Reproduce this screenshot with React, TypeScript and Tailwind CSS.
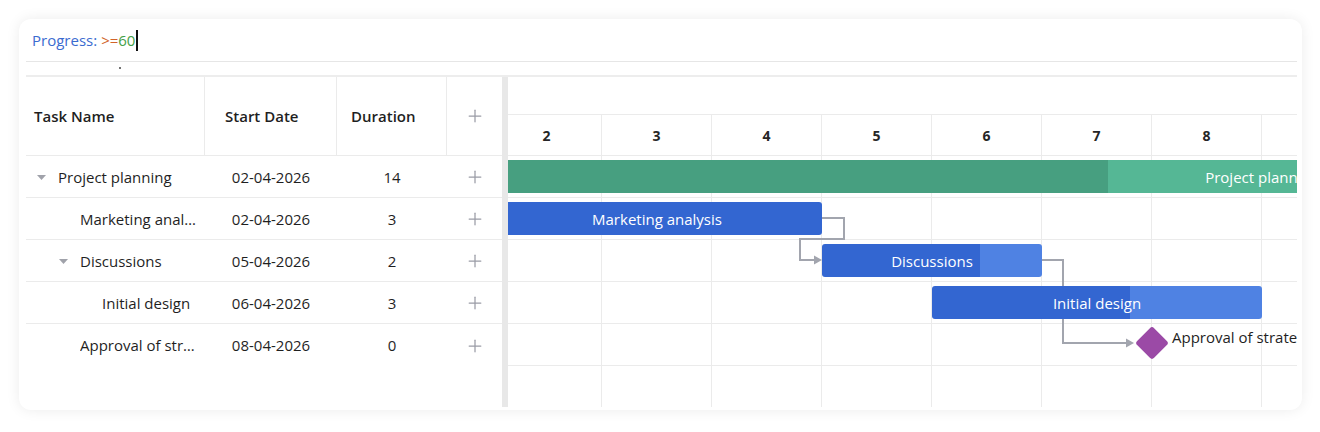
import { Plus } from "lucide-react"

type Task = {
    name: string
    start: string
    duration: number
    level: number
    parent?: boolean
}

const tasks: Task[] = [
    { name: "Project planning", start: "02-04-2026", duration: 14, level: 0, parent: true },
    { name: "Marketing analysis", start: "02-04-2026", duration: 3, level: 1 },
    { name: "Discussions", start: "05-04-2026", duration: 2, level: 1, parent: true },
    { name: "Initial design", start: "06-04-2026", duration: 3, level: 2 },
    { name: "Approval of strategy", start: "08-04-2026", duration: 0, level: 1 },
]

const days = [2, 3, 4, 5, 6, 7, 8, 9]
const DAY = 110
const ROW = 42

type Bar = {
    label: string
    day: number
    len: number
    row: number
    progress: number
    dark: string
    light: string
}

const bars: Bar[] = [
    { label: "Project planning", day: 0, len: 14, row: 0, progress: 40, dark: "#479f80", light: "#55b795" },
    { label: "Marketing analysis", day: 0, len: 3, row: 1, progress: 100, dark: "#3366d1", light: "#4f82e3" },
    { label: "Discussions", day: 3, len: 2, row: 2, progress: 72, dark: "#3366d1", light: "#4f82e3" },
    { label: "Initial design", day: 4, len: 3, row: 3, progress: 60, dark: "#3366d1", light: "#4f82e3" },
]

function Caret() {
    return (
        <svg width="9" height="5" viewBox="0 0 9 5" className="shrink-0">
            <path d="M0 0h9L4.5 5z" fill="#a0a2aa" />
        </svg>
    )
}

function TaskGrid() {
    return (
        <div className="w-[476px] shrink-0 flex flex-col">
            {/* Header */}
            <div className="h-[79px] flex border-b border-[#ebebeb] text-[15px] font-semibold text-[#1f1f1f]">
                <div className="w-[179px] border-r border-[#ebebeb] flex items-center pl-2">Task Name</div>
                <div className="w-[132px] border-r border-[#ebebeb] flex items-center pl-5">Start Date</div>
                <div className="w-[110px] border-r border-[#ebebeb] flex items-center pl-[14px]">Duration</div>
                <div className="flex-1 flex items-center justify-center">
                    <Plus className="w-5 h-5 text-[#9a9ca6]" strokeWidth={1.5} />
                </div>
            </div>

            {/* Rows */}
            {tasks.map((t, i) => (
                <div
                    key={t.name}
                    className={
                        "flex items-center pt-px text-[15px] text-[#1f1f1f] h-[42px] " +
                        (i < tasks.length - 1 ? "border-b border-[#ebebeb]" : "")
                    }
                >
                    <div className="w-[179px] flex items-center pr-2 min-w-0" style={{ paddingLeft: 11 + t.level * 22 }}>
                        <div className="w-[21px] shrink-0 flex items-center">{t.parent && <Caret />}</div>
                        <span className="truncate">{t.name}</span>
                    </div>
                    <div className="w-[132px] text-center">{t.start}</div>
                    <div className="w-[110px] text-center">{t.duration}</div>
                    <div className="flex-1 flex items-center justify-center">
                        <Plus className="w-5 h-5 text-[#9a9ca6]" strokeWidth={1.5} />
                    </div>
                </div>
            ))}
        </div>
    )
}

function Timeline() {
    return (
        <div className="flex-1 overflow-hidden">
            <div className="ml-[-16px] w-[880px] flex flex-col">
                <div className="h-[38px] border-b border-[#ebebeb]" />
                <div className="h-[41px] flex border-b border-[#ebebeb]">
                    {days.map((d) => (
                        <div
                            key={d}
                            className="w-[110px] shrink-0 border-r border-[#ebebeb] flex items-center justify-center pt-px text-[14px] font-bold text-[#262626]"
                        >
                            {d}
                        </div>
                    ))}
                </div>

                {/* Body */}
                <div className="relative">
                    {Array.from({ length: 6 }).map((_, r) => (
                        <div key={r} className="h-[42px] flex border-b border-[#ebebeb]">
                            {days.map((d) => (
                                <div key={d} className="w-[110px] shrink-0 border-r border-[#ebebeb]" />
                            ))}
                        </div>
                    ))}

                    {/* Links */}
                    <svg className="absolute left-0 top-0" width="880" height="252" fill="none">
                        <path d="M330 62H352V83H308V104H324" stroke="#a2a5ae" strokeWidth="2" />
                        <path d="M322 99.5L330 104L322 108.5Z" fill="#a2a5ae" />
                        <path d="M550 104H571V187H636" stroke="#a2a5ae" strokeWidth="2" />
                        <path d="M634 182.5L642 187L634 191.5Z" fill="#a2a5ae" />
                    </svg>

                    {/* Bars */}
                    {bars.map((b) => (
                        <div
                            key={b.label}
                            className="absolute h-[33px] rounded-[3px] overflow-hidden flex items-center justify-center pt-px text-[15px] text-white"
                            style={{
                                left: b.day * DAY,
                                width: b.len * DAY,
                                top: b.row * ROW + 4,
                                background: `linear-gradient(to right, ${b.dark} ${b.progress}%, ${b.light} ${b.progress}%)`,
                            }}
                        >
                            <span className="whitespace-nowrap">{b.label}</span>
                        </div>
                    ))}

                    {/* Milestone */}
                    <div className="absolute flex items-center" style={{ left: 6 * DAY - 17, top: 4 * ROW + 2 }}>
                        <div className="w-[34px] h-[34px] flex items-center justify-center">
                            <div className="w-[24px] h-[24px] rotate-45 rounded-[3px] bg-[#9b4aa6]" />
                        </div>
                        <span className="ml-[3px] -mt-[11px] whitespace-nowrap text-[15px] text-[#1f1f1f]">Approval of strategy</span>
                    </div>
                </div>
            </div>
        </div>
    )
}

export default function App() {
    return (
        <div className="min-h-screen bg-white p-[19px] font-['Open_Sans',sans-serif]">
            <div className="w-[1283px] h-[391px] rounded-xl bg-white shadow-[0_0_14px_rgba(0,0,0,0.08)] pl-[7px] pr-[5px] pb-[3px] flex flex-col overflow-hidden">
                {/* Filter */}
                <div className="h-[43px] shrink-0 border-b border-[#e6e6e6] flex items-center pl-[6px] text-[15px]">
                    <span className="text-[#3a6bd0]">Progress:</span>
                    <span className="ml-1 text-[#d2632a]">&gt;=</span>
                    <span className="text-[#43a047]">60</span>
                    <span className="ml-px w-[2px] h-[21px] bg-[#111]" />
                </div>
                <div className="h-[15px] shrink-0 border-b-2 border-[#ededed] pl-[93px] pt-[5px]">
                    <div className="w-[2px] h-[2px] rounded-full bg-[#444]" />
                </div>

                {/* Gantt */}
                <div className="flex-1 flex min-h-0">
                    <TaskGrid />
                    <div className="w-[6px] shrink-0 bg-[#e8e8e8]" />
                    <Timeline />
                </div>
            </div>
        </div>
    )
}
